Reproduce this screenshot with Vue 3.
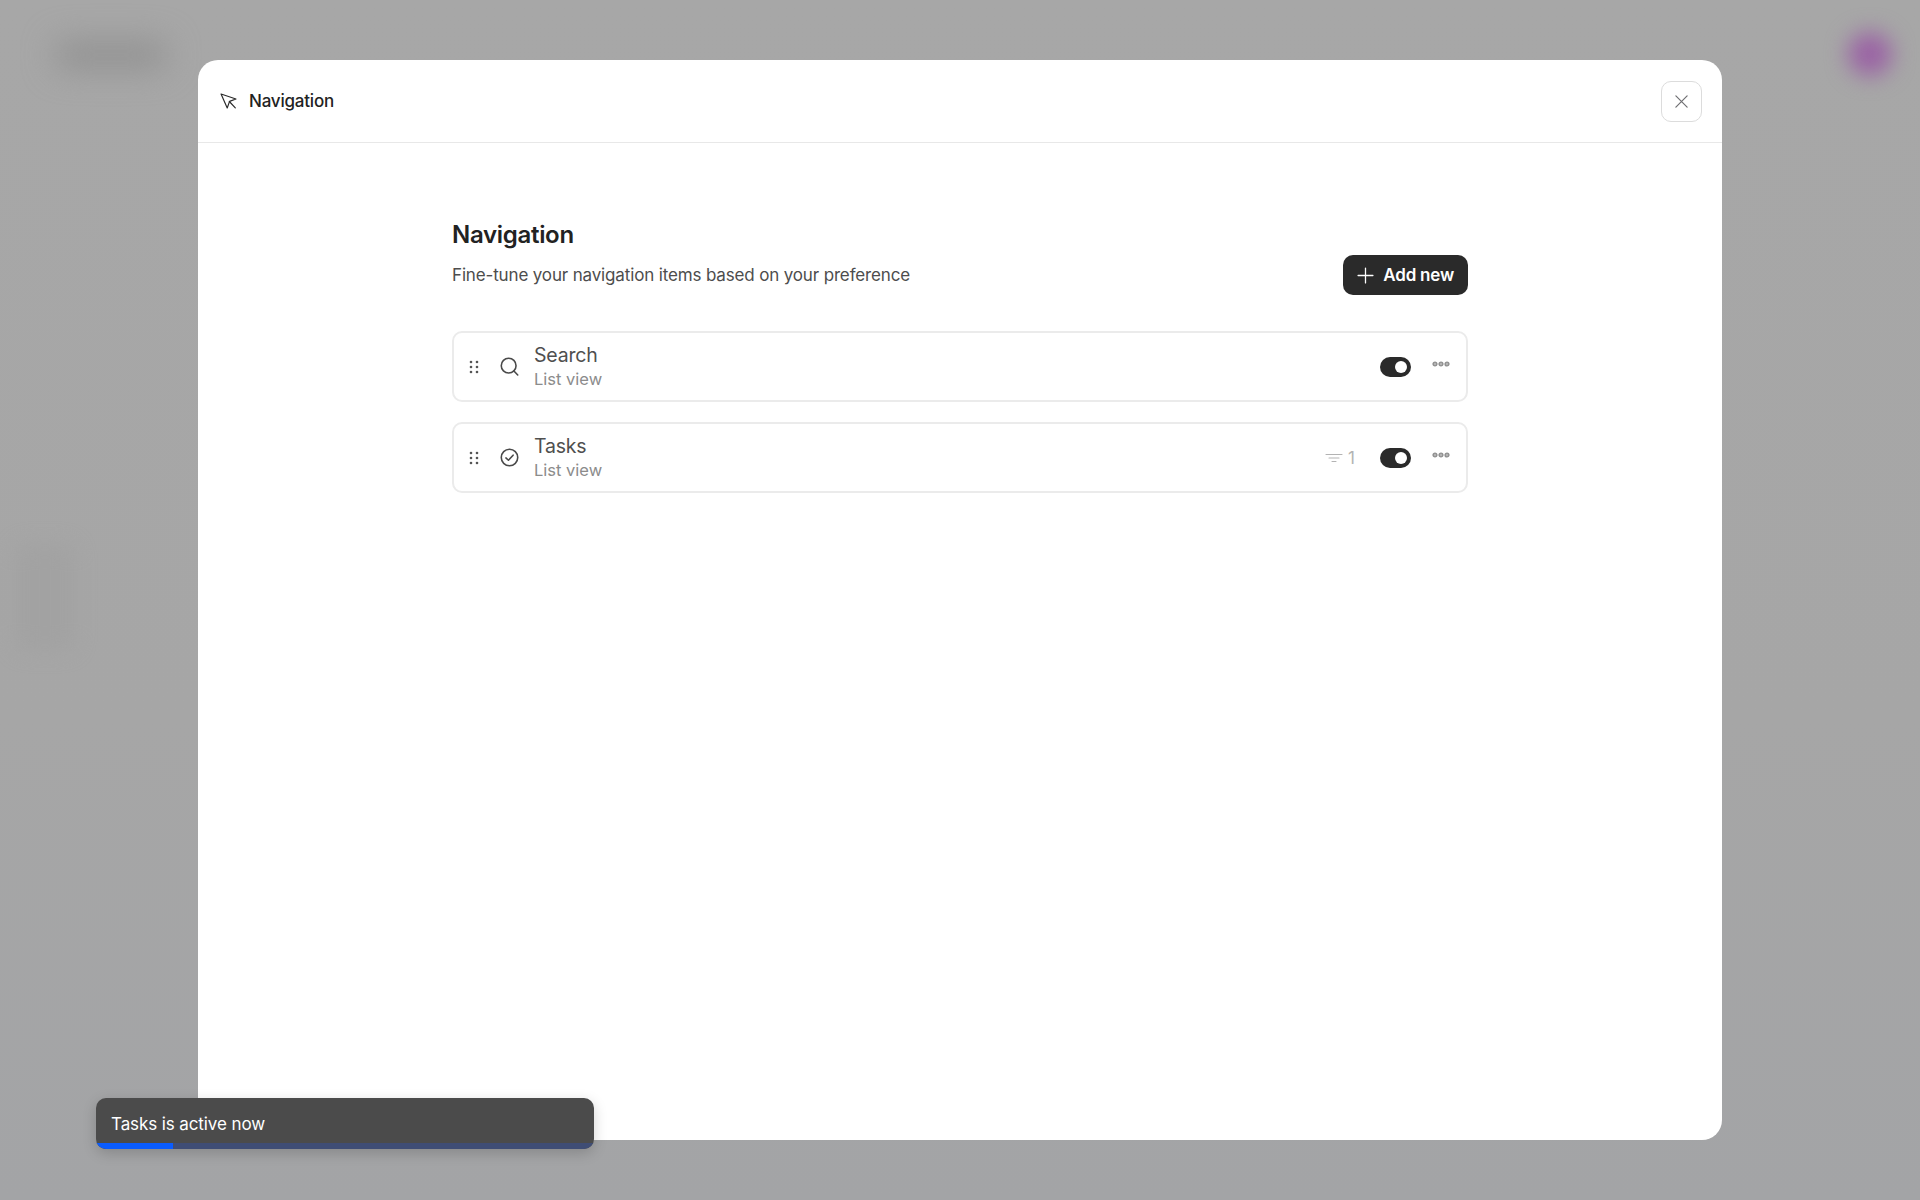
<template>
  <div class="page">
    <div class="backdrop-logo"></div>
    <div class="backdrop-avatar"></div>
    <div class="backdrop-rail"></div>

    <div class="modal">
      <header class="modal-header">
        <div class="modal-title">
          <svg class="cursor-icon" viewBox="0 0 16 16" fill="none" stroke="currentColor" stroke-width="1.1" stroke-linejoin="round" stroke-linecap="round">
            <path d="M1 1l14 4.6-6 2.3-2.2 6.2L1 1z"></path>
            <path d="M8.8 8l5.6 6"></path>
          </svg>
          <span>Navigation</span>
        </div>
        <button class="close-btn" aria-label="Close">
          <svg viewBox="0 0 16 16" fill="none" stroke="currentColor" stroke-width="1.3" stroke-linecap="round">
            <path d="M2 2l12 12M14 2L2 14"></path>
          </svg>
        </button>
      </header>

      <main class="content">
        <h1>Navigation</h1>
        <div class="subhead">
          <p>Fine-tune your navigation items based on your preference</p>
          <button class="add-btn">
            <svg viewBox="0 0 16 16" fill="none" stroke="currentColor" stroke-width="1.2" stroke-linecap="round">
              <path d="M8 1v14M1 8h14"></path>
            </svg>
            Add new
          </button>
        </div>

        <ul class="nav-list">
          <li v-for="item in items" :key="item.name" class="nav-row">
            <svg class="grip" viewBox="0 0 10 14" fill="currentColor">
              <circle v-for="dot in gripDots" :key="dot.x + '-' + dot.y" :cx="dot.x" :cy="dot.y" r="1.3"></circle>
            </svg>
            <svg v-if="item.icon === 'search'" class="row-icon" viewBox="0 0 18 18" fill="none" stroke="currentColor" stroke-width="1.5" stroke-linecap="round">
              <circle cx="8.2" cy="8.2" r="7"></circle>
              <path d="M13.2 13.2l3.6 3.8"></path>
            </svg>
            <svg v-else class="row-icon" viewBox="0 0 18 18" fill="none" stroke="currentColor" stroke-width="1.5" stroke-linecap="round" stroke-linejoin="round">
              <circle cx="9" cy="9" r="7.8"></circle>
              <path d="M5.6 9.4l2.4 2.2 4.4-4.8"></path>
            </svg>
            <div class="row-text">
              <span class="row-name">{{ item.name }}</span>
              <span class="row-sub">List view</span>
            </div>
            <div v-if="item.filters" class="filter-count">
              <svg viewBox="0 0 18 10" fill="none" stroke="currentColor" stroke-width="1.1" stroke-linecap="round">
                <path d="M1 1.5h16M4 5h10M7 8.5h4"></path>
              </svg>
              <span>{{ item.filters }}</span>
            </div>
            <span class="toggle"><span class="knob"></span></span>
            <svg class="more" viewBox="0 0 18 6" fill="#b4b4b4" stroke="currentColor" stroke-width="1.4">
              <circle cx="3" cy="3" r="1.9"></circle>
              <circle cx="9" cy="3" r="1.9"></circle>
              <circle cx="15" cy="3" r="1.9"></circle>
            </svg>
          </li>
        </ul>
      </main>
    </div>

    <div class="toast">
      <div class="toast-text">Tasks is active now</div>
      <div class="toast-track"><div class="toast-fill" :style="{ width: progress + '%' }"></div></div>
    </div>
  </div>
</template>

<script setup>
const items = [
  { name: 'Search', icon: 'search', filters: 0 },
  { name: 'Tasks', icon: 'check', filters: 1 }
]

const gripDots = []
for (const y of [2, 7, 12]) {
  for (const x of [2, 8]) gripDots.push({ x, y })
}

const progress = 15.5
</script>

<style>
html,
body {
  margin: 0;
  background: #a6a6a6;
}
</style>

<style scoped>
.page {
  position: relative;
  height: 1200px;
  overflow: hidden;
  background: linear-gradient(#a7a7a7, #a6a6a6 60%, #a3a4a6);
  font-family: Inter, "Liberation Sans", sans-serif;
  display: flex;
  justify-content: center;
  align-items: center;
}

.backdrop-logo {
  position: absolute;
  left: 56px;
  top: 42px;
  width: 110px;
  height: 26px;
  border-radius: 8px;
  background: #909090;
  filter: blur(16px);
}

.backdrop-avatar {
  position: absolute;
  left: 1848px;
  top: 32px;
  width: 44px;
  height: 44px;
  border-radius: 50%;
  background: #9a62a4;
  filter: blur(11px);
}

.backdrop-rail {
  position: absolute;
  left: 16px;
  top: 545px;
  width: 58px;
  height: 105px;
  border-radius: 12px;
  background: #a2a2a2;
  filter: blur(10px);
}

.modal {
  position: relative;
  width: 1524px;
  height: 1080px;
  background: #fff;
  border-radius: 20px;
  display: flex;
  flex-direction: column;
}

.modal-header {
  height: 83px;
  flex-shrink: 0;
  box-sizing: border-box;
  padding: 0 20px;
  border-bottom: 1px solid #e8e8e8;
  display: flex;
  align-items: center;
  justify-content: space-between;
}

.modal-title {
  display: flex;
  align-items: center;
  gap: 12px;
  font-size: 17px;
  font-weight: 500;
  letter-spacing: -0.2px;
  color: #222;
}

.cursor-icon {
  width: 17px;
  height: 17px;
  color: #2a2a2a;
  margin-left: 2px;
}

.close-btn {
  width: 41px;
  height: 41px;
  box-sizing: border-box;
  padding: 0;
  background: #fff;
  border: 1.5px solid #dcdcdc;
  border-radius: 10px;
  color: #6f6f72;
  display: flex;
  align-items: center;
  justify-content: center;
}

.close-btn svg {
  width: 15px;
  height: 15px;
}

.content {
  width: 1016px;
  margin: 0 auto;
  padding-top: 77px;
}

h1 {
  margin: 0;
  font-size: 24px;
  line-height: 30px;
  font-weight: 600;
  letter-spacing: -0.3px;
  color: #222;
}

.subhead {
  margin-top: 5px;
  display: flex;
  align-items: center;
  justify-content: space-between;
}

.subhead p {
  margin: 0;
  font-size: 17px;
  letter-spacing: -0.15px;
  color: #4d4d4d;
}

.add-btn {
  height: 40px;
  padding: 0 14px;
  border: none;
  border-radius: 10px;
  background: #2a2a2a;
  color: #fff;
  font-family: inherit;
  font-size: 17px;
  font-weight: 600;
  letter-spacing: -0.2px;
  display: flex;
  align-items: center;
  gap: 9px;
}

.add-btn svg {
  width: 17px;
  height: 17px;
}

.nav-list {
  list-style: none;
  margin: 36px 0 0;
  padding: 0;
  display: flex;
  flex-direction: column;
  gap: 20px;
}

.nav-row {
  height: 71px;
  box-sizing: border-box;
  padding: 0 16px 0 15px;
  border: 2px solid #ebebeb;
  border-radius: 10px;
  display: flex;
  align-items: center;
}

.grip {
  width: 10px;
  height: 14px;
  color: #555;
}

.row-icon {
  width: 19px;
  height: 19px;
  margin-left: 21px;
  color: #4a4a4a;
}

.row-text {
  margin-left: 15px;
  flex: 1;
  display: flex;
  flex-direction: column;
}

.row-name {
  font-size: 19.5px;
  line-height: 24px;
  letter-spacing: -0.2px;
  color: #4f4f4f;
}

.row-sub {
  font-size: 16.5px;
  line-height: 22px;
  color: #8c8c8c;
  margin-top: 1px;
}

.filter-count {
  display: flex;
  align-items: center;
  gap: 5px;
  margin-right: 25px;
  font-size: 17px;
  color: #b3b3b3;
}

.filter-count svg {
  width: 18px;
  height: 10px;
}

.toggle {
  width: 31px;
  height: 20px;
  border-radius: 10px;
  background: #2a2a2a;
  display: flex;
  align-items: center;
  justify-content: flex-end;
  box-sizing: border-box;
  padding: 0 4px 0 0;
}

.knob {
  width: 12px;
  height: 12px;
  border-radius: 50%;
  background: #fff;
}

.more {
  width: 18px;
  height: 6px;
  margin: -5px 0 0 21px;
  color: #8f8f8f;
}

.toast {
  position: absolute;
  left: 96px;
  top: 1098px;
  width: 498px;
  height: 51px;
  border-radius: 10px;
  overflow: hidden;
  background: #4b4b4b;
  box-shadow: 0 4px 14px rgba(0, 0, 0, 0.18);
  display: flex;
  flex-direction: column;
}

.toast-text {
  flex: 1;
  padding: 7px 15px 0;
  display: flex;
  align-items: center;
  font-size: 17px;
  letter-spacing: -0.1px;
  color: #fff;
}

.toast-track {
  height: 6px;
  background: #3f4d75;
}

.toast-fill {
  height: 100%;
  background: #0a5cff;
}
</style>
